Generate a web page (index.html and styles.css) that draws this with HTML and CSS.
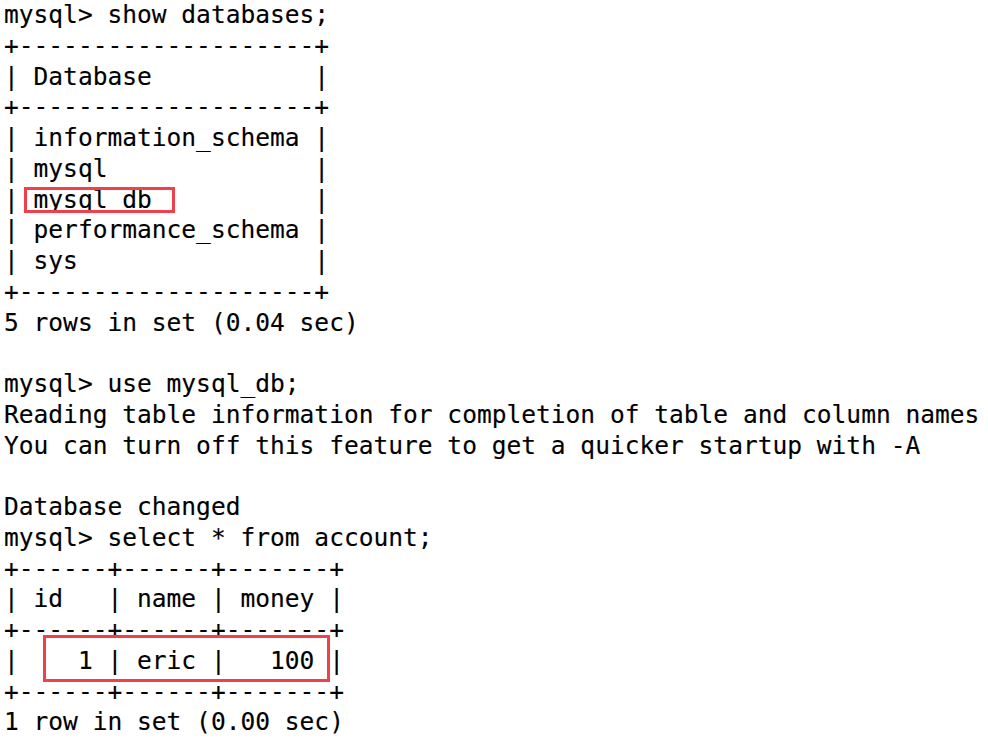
FILE: index.html
```html
<!DOCTYPE html>
<html>
<head>
<meta charset="utf-8">
<link rel="stylesheet" href="styles.css">
</head>
<body>
<div class="term">
<pre class="out">mysql&gt; show databases;
+--------------------+
| Database           |
+--------------------+
| information_schema |
| mysql              |
| mysql<span class="clipped">_</span>db           |
| performance_schema |
| sys                |
+--------------------+
5 rows in set (0.04 sec)

mysql&gt; use mysql_db;
Reading table information for completion of table and column names
You can turn off this feature to get a quicker startup with -A

Database changed
mysql&gt; select * from account;
+------+------+-------+
| id   | name | money |
+------+------+-------+
|    1 | eric |   100 |
+------+------+-------+
1 row in set (0.00 sec)</pre>
<div class="mark mark-db"></div>
<div class="mark mark-row"></div>
</div>
</body>
</html>
```
FILE: styles.css
```css
html, body {
  margin: 0;
  padding: 0;
  background: #ffffff;
}
.term {
  position: relative;
  width: 988px;
  height: 740px;
  overflow: hidden;
}
.out {
  margin: 0;
  padding: 0 0 0 4px;
  font-family: "DejaVu Sans Mono", monospace;
  font-size: 24.55px;
  line-height: 30.75px;
  color: #000000;
  white-space: pre;
  -webkit-text-stroke: 0.15px #000000;
}
.clipped {
  color: transparent;
  -webkit-text-stroke: 0 transparent;
}
.mark {
  position: absolute;
  border: 3px solid #f0404a;
  box-sizing: border-box;
}
.mark-db {
  left: 24px;
  top: 187px;
  width: 151px;
  height: 26px;
}
.mark-row {
  left: 43px;
  top: 635px;
  width: 287px;
  height: 47px;
}
```
